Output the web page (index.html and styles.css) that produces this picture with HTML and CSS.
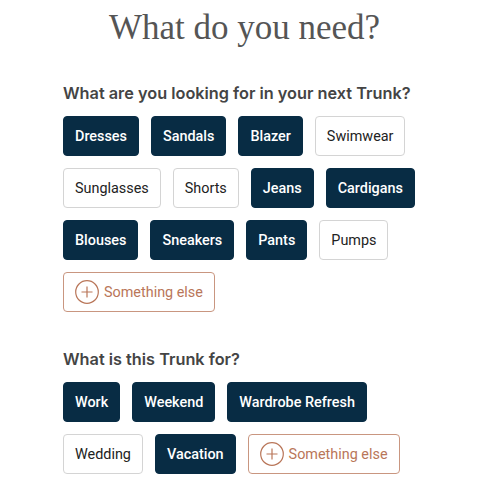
FILE: index.html
```html
<!DOCTYPE html>
<html lang="en">
<head>
<meta charset="utf-8">
<title>What do you need?</title>
<link rel="stylesheet" href="styles.css">
</head>
<body>
<main class="page">
  <h1 class="title">What do you need?</h1>

  <section class="group">
    <h2 class="question">What are you looking for in your next Trunk?</h2>
    <div class="chips">
      <button class="chip on">Dresses</button>
      <button class="chip on">Sandals</button>
      <button class="chip on">Blazer</button>
      <button class="chip">Swimwear</button>
      <button class="chip">Sunglasses</button>
      <button class="chip">Shorts</button>
      <button class="chip on">Jeans</button>
      <button class="chip on">Cardigans</button>
      <button class="chip on">Blouses</button>
      <button class="chip on">Sneakers</button>
      <button class="chip on">Pants</button>
      <button class="chip">Pumps</button>
      <button class="chip other"><svg class="plus" viewBox="0 0 24 24" width="24" height="24"><circle cx="12" cy="12" r="11.3" fill="none" stroke="currentColor" stroke-width="1.2"/><path d="M12 6.5v11M6.5 12h11" stroke="currentColor" stroke-width="1.2"/></svg>Something else</button>
    </div>
  </section>

  <section class="group second">
    <h2 class="question">What is this Trunk for?</h2>
    <div class="chips">
      <button class="chip on">Work</button>
      <button class="chip on">Weekend</button>
      <button class="chip on">Wardrobe Refresh</button>
      <button class="chip">Wedding</button>
      <button class="chip on">Vacation</button>
      <button class="chip other"><svg class="plus" viewBox="0 0 24 24" width="24" height="24"><circle cx="12" cy="12" r="11.3" fill="none" stroke="currentColor" stroke-width="1.2"/><path d="M12 6.5v11M6.5 12h11" stroke="currentColor" stroke-width="1.2"/></svg>Something else</button>
    </div>
  </section>
</main>
</body>
</html>
```

FILE: styles.css
```css
* { box-sizing: border-box; }
html, body { margin: 0; padding: 0; background: #fff; }
body { font-family: Roboto, "Liberation Sans", sans-serif; }
.page { padding: 7px 63px 0 63px; }
.title {
  margin: 0;
  text-align: center;
  font-family: "Liberation Serif", serif;
  font-weight: 400;
  font-size: 35px;
  line-height: 42px;
  color: #555;
}
.group { margin-top: 33px; }
.group.second { margin-top: 36px; }
.question {
  margin: 0 0 12px 0;
  font-family: Inter, "Liberation Sans", sans-serif;
  font-size: 16.3px;
  line-height: 22px;
  font-weight: 600;
  color: #444;
}
.chips { display: flex; flex-wrap: wrap; gap: 12px 12px; }
.chip {
  height: 40px;
  padding: 0 11px;
  border-radius: 4px;
  border: 1px solid #d4d4d4;
  background: #fff;
  color: #222;
  font-family: Roboto, "Liberation Sans", sans-serif;
  font-size: 14.4px;
  font-weight: 400;
  display: inline-flex;
  align-items: center;
  gap: 5px;
}
.chip.on { background: #082c44; border-color: #082c44; color: #fff; font-weight: 500; }
.chip.other { border-color: #c99680; color: #b97659; font-weight: 400; }
.plus { display: block; }
```
